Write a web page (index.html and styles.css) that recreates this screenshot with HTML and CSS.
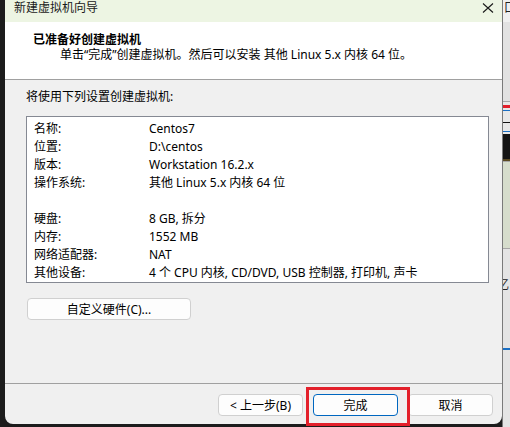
FILE: index.html
```html
<!DOCTYPE html>
<html lang="zh-CN">
<head>
  <meta charset="UTF-8" />
  <title>新建虚拟机向导</title>
  <link rel="stylesheet" href="styles.css">
</head>
<body>
  <div class="edge-left"></div>

  <div class="dialog">
    <div class="titlebar">
      <span class="title">新建虚拟机向导</span>
      <svg class="close" width="12" height="10" viewBox="0 0 12 10">
        <path d="M1 0.5 L11 9.5 M11 0.5 L1 9.5" stroke="#1a1a1a" stroke-width="1.1" fill="none"/>
      </svg>
    </div>

    <div class="header">
      <div class="header-title">已准备好创建虚拟机</div>
      <div class="header-sub">单击“完成”创建虚拟机。然后可以安装 其他 Linux 5.x 内核 64 位。</div>
    </div>

    <div class="content">
      <div class="intro">将使用下列设置创建虚拟机:</div>
      <div class="summary">
        <span>名称:</span><span>Centos7</span>
        <span>位置:</span><span>D:\centos</span>
        <span>版本:</span><span>Workstation 16.2.x</span>
        <span>操作系统:</span><span>其他 Linux 5.x 内核 64 位</span>
        <span></span><span></span>
        <span>硬盘:</span><span>8 GB, 拆分</span>
        <span>内存:</span><span>1552 MB</span>
        <span>网络适配器:</span><span>NAT</span>
        <span>其他设备:</span><span>4 个 CPU 内核, CD/DVD, USB 控制器, 打印机, 声卡</span>
      </div>
      <button class="btn custom-btn">自定义硬件(C)...</button>
    </div>

    <div class="footer">
      <button class="btn">&lt; 上一步(B)</button>
      <button class="btn primary">完成</button>
      <button class="btn">取消</button>
    </div>

    <!-- red highlight drawn over the finish button -->
    <div class="highlight"></div>
  </div>

  <div class="edge-right">
    <div class="er-top">口</div>
    <div class="er-grey"></div>
    <div class="er-line grey"></div>
    <div class="er-gap h3"></div>
    <div class="er-line red"></div>
    <div class="er-gap h2"></div>
    <div class="er-line blue"></div>
    <div class="er-gap h11"></div>
    <div class="er-line black"></div>
    <div class="er-gap h8"></div>
    <div class="er-line blue"></div>
    <div class="er-gap h2"></div>
    <div class="er-block"></div>
    <div class="er-line brown"></div>
    <div class="er-line grey"></div>
    <div class="er-green"></div>
    <div class="er-line grey"></div>
    <div class="er-low">忆</div>
    <div class="er-line blue2"></div>
    <div class="er-rest"></div>
  </div>
</body>
</html>
```

FILE: styles.css
```css
body {
  margin: 0;
  width: 510px;
  height: 427px;
  overflow: hidden;
  background-color: #1c1c1c;
  display: flex;
  font-family: "Noto Sans", "Noto Sans CJK SC", sans-serif;
  font-size: 12px;
  color: #000;
}

.edge-left {
  width: 5px;
  flex: none;
}

.dialog {
  position: relative;
  width: 497px;
  height: 424px;
  flex: none;
  background-color: #f0f0f0;
  border-radius: 0 0 8px 8px;
  display: flex;
  flex-direction: column;
  box-sizing: border-box;
}

.titlebar {
  height: 22px;
  flex: none;
  background-color: #edf5e3;
  display: flex;
  justify-content: space-between;
  align-items: flex-start;
  padding: 0 8px 0 9px;
}

.title {
  line-height: 16px;
  color: #1a1a1a;
}

.close {
  margin-top: 3px;
}

.header {
  height: 57px;
  flex: none;
  background: #fff;
  border-bottom: 1px solid #a0a0a0;
  padding: 10px 0 0 28px;
  box-sizing: content-box;
  height: 47px;
}

.header-title {
  font-weight: bold;
  line-height: 16px;
}

.header-sub {
  line-height: 14px;
  padding-left: 27px;
}

.content {
  flex: 1;
  padding: 9px 13px 0 21px;
  display: flex;
  flex-direction: column;
  align-items: flex-start;
}

.intro {
  line-height: 16px;
}

.summary {
  margin-top: 11px;
  align-self: stretch;
  background: #fff;
  border: 1px solid #858993;
  padding: 2px 0 1px 7px;
  display: grid;
  grid-template-columns: 115px 1fr;
  grid-auto-rows: 18px;
  align-items: center;
  white-space: nowrap;
}

.btn {
  font-family: inherit;
  font-size: 12px;
  height: 22px;
  width: 85px;
  padding: 0;
  background: #fdfdfd;
  border: 1px solid #d0d0d0;
  border-radius: 4px;
  color: #000;
}

.custom-btn {
  width: 164px;
  margin-top: 15px;
  margin-left: 1px;
}

.footer {
  flex: none;
  border-top: 1px solid #a0a0a0;
  padding: 10px 9px 8px 0;
  display: flex;
  justify-content: flex-end;
  gap: 10px;
}

.primary {
  border-color: #0067c0;
}

.highlight {
  position: absolute;
  left: 301px;
  top: 387px;
  width: 98px;
  height: 33px;
  border: 3px solid #e3202b;
}

.edge-right {
  width: 8px;
  flex: none;
  border-left: 1px solid #7a7a7a;
  box-sizing: border-box;
  display: flex;
  flex-direction: column;
  background: #dcdcdc;
  overflow: hidden;
}

.er-top {
  height: 22px;
  background: #f0f0f0;
  line-height: 16px;
  padding-left: 1px;
  white-space: nowrap;
  color: #222;
}

.er-grey { height: 79px; background: #e2e2e2; }
.er-line { height: 1px; flex: none; }
.er-line.grey { background: #a6a6a6; }
.er-line.red { height: 3px; background: #e3202b; }
.er-line.blue { background: #1a6fc4; }
.er-line.blue2 { height: 2px; background: #1a6fc4; }
.er-line.black { background: #111; }
.er-line.brown { height: 2px; background: #5b4a22; }
.er-gap { flex: none; background: #e8e8e8; }
.er-gap.h2 { height: 2px; }
.er-gap.h3 { height: 3px; }
.er-gap.h8 { height: 8px; }
.er-gap.h11 { height: 11px; }
.er-block { height: 25px; background: #141414; }
.er-green { height: 86px; background: #d6ddcc; }

.er-low {
  height: 99px;
  background: #e4e4e4;
  padding-top: 28px;
  box-sizing: border-box;
  line-height: 16px;
  white-space: nowrap;
  margin-left: -6px;
  color: #222;
}

.er-rest { flex: 1; background: #e4e4e4; }
```
